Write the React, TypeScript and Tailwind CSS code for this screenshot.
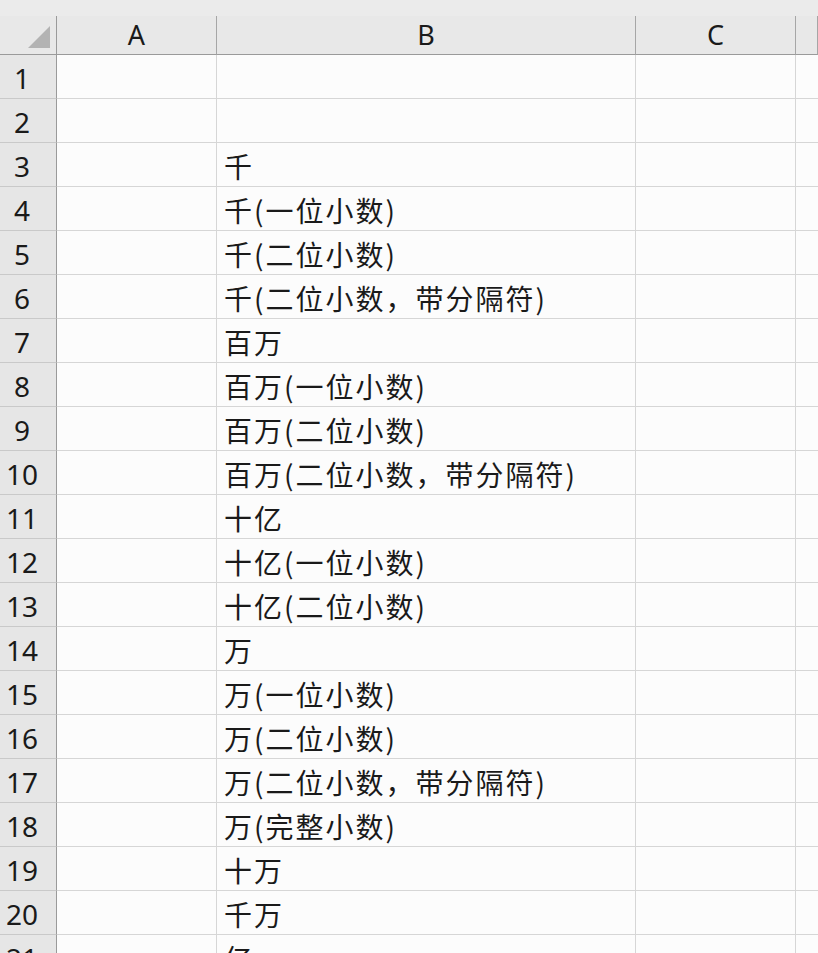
const columns = ["A", "B", "C", ""];

const labels: Record<number, string> = {
  3: "千",
  4: "千(一位小数)",
  5: "千(二位小数)",
  6: "千(二位小数，带分隔符)",
  7: "百万",
  8: "百万(一位小数)",
  9: "百万(二位小数)",
  10: "百万(二位小数，带分隔符)",
  11: "十亿",
  12: "十亿(一位小数)",
  13: "十亿(二位小数)",
  14: "万",
  15: "万(一位小数)",
  16: "万(二位小数)",
  17: "万(二位小数，带分隔符)",
  18: "万(完整小数)",
  19: "十万",
  20: "千万",
  21: "亿",
};

const rows = Array.from({ length: 21 }, (_, i) => i + 1);

const gridCols = "grid grid-cols-[57px_160px_419px_160px_1fr]";

export default function App() {
  return (
    <div className="h-[953px] w-[818px] overflow-hidden bg-[#fcfcfc] font-['Noto_Sans','Noto_Sans_CJK_SC',sans-serif] text-[#1a1a1a]">
      {/* Column headers */}
      <div className="bg-[#e8e8e8]">
        <div className="h-[16px] bg-[#ebebeb]" />
        <div className={`${gridCols} h-[39px]`}>
          <div className="flex items-end justify-start border-r border-b border-[#9a9a9a] pb-[6px] pl-[28px]">
            <svg width="22" height="22" viewBox="0 0 22 22">
              <polygon points="22,0 22,22 0,22" fill="#b3b3b3" />
            </svg>
          </div>
          {columns.map((c, i) => (
            <div
              key={i}
              className="flex items-end justify-center border-r border-b border-r-[#a6a6a6] border-b-[#9a9a9a] pb-[2px] text-[27px] leading-[34px]"
            >
              {c}
            </div>
          ))}
        </div>
      </div>

      {/* Sheet rows */}
      {rows.map((r) => (
        <div key={r} className={`${gridCols} h-[44px]`}>
          <div className="flex items-center justify-center border-r border-b border-r-[#9a9a9a] border-b-[#c9c9c9] bg-[#e6e6e6] pr-[12px] pt-[2px] text-[28px] leading-none">
            {r}
          </div>
          <div className="border-r border-b border-[#d6d6d6]" />
          <div className="flex items-center border-r border-b border-[#d6d6d6] pl-[7px] pt-[3px] font-['Noto_Sans_CJK_SC',sans-serif] text-[28px] leading-none tracking-[2px] whitespace-nowrap">
            {labels[r] ?? ""}
          </div>
          <div className="border-r border-b border-[#d6d6d6]" />
          <div className="border-b border-[#d6d6d6]" />
        </div>
      ))}
    </div>
  );
}
